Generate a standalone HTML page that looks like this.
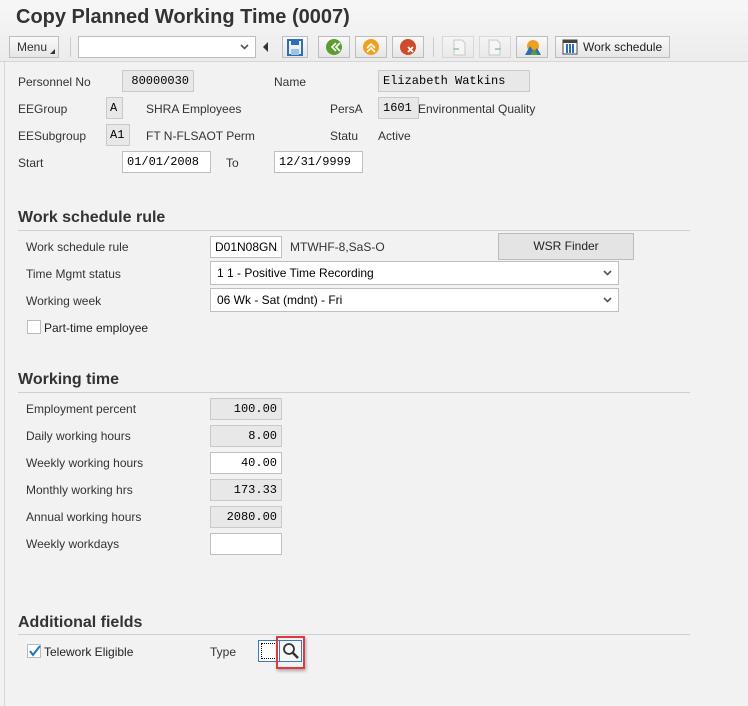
<!DOCTYPE html>
<html><head><meta charset="utf-8"><style>
*{box-sizing:border-box;margin:0;padding:0}
body{width:748px;height:706px;background:#f2f2f2;font-family:"Liberation Sans",Arial,sans-serif;font-size:12px;color:#333;position:relative;overflow:hidden}
.a{position:absolute}
.t{position:absolute;line-height:14px;font-size:12px;color:#333}
.in{position:absolute;height:22px;border:1px solid #bfbfbf;background:#fff;font-family:"Liberation Mono",monospace;font-size:12px;line-height:20px;padding:0 4px;color:#000}
.ro{background:#e8e8e8;border-color:#c9c9c9}
.r{text-align:right}
.h{position:absolute;left:18px;font-size:16px;font-weight:bold;color:#333}
.ln{position:absolute;left:18px;width:672px;height:1px;background:#cfcfcf}
.tb{position:absolute;top:36px;height:22px;border:1px solid #bdbdbd;background:linear-gradient(#fafafa,#e6e6e6)}
.sel{position:absolute;left:210px;width:409px;height:24px;border:1px solid #bfbfbf;background:#fff;font-size:12px;line-height:22px;padding-left:6px;color:#000}
.chev{position:absolute;right:6px;top:8px}
</style></head><body>
<div class="a" style="left:0;top:0;width:748px;height:62px;background:linear-gradient(#f7f7f7,#ececec);border-bottom:1px solid #d6d6d6"></div>
<div class="a" style="left:16px;top:6px;font-size:20px;font-weight:bold;color:#333">Copy Planned Working Time (0007)</div>
<div class="tb" style="left:9px;width:50px;font-size:12px;line-height:20px;padding-left:7px">Menu<svg class="a" style="right:3px;bottom:3px" width="5" height="5"><path d="M5 0v5h-5z" fill="#333"/></svg></div>
<div class="a" style="left:70px;top:37px;width:1px;height:20px;background:#ccc"></div>
<div class="a" style="left:78px;top:36px;width:178px;height:22px;border:1px solid #bdbdbd;background:#fff"><svg class="chev" style="top:7px" width="9" height="6"><path d="M1 1l3.5 3.5L8 1" stroke="#555" stroke-width="1.6" fill="none"/></svg></div>
<div class="a" style="left:263px;top:42px;width:0;height:0;border-top:5px solid transparent;border-bottom:5px solid transparent;border-right:5px solid #333"></div>
<div class="tb" style="left:282px;width:26px"><svg width="24" height="20"><rect x="5" y="3" width="14" height="15" fill="none" stroke="#2c6fb7" stroke-width="2"/><rect x="8" y="3" width="8" height="5" fill="#2c6fb7"/><rect x="8" y="12" width="8" height="6" fill="#9cc3ec"/></svg></div>
<div class="tb" style="left:318px;width:32px"><svg width="30" height="20"><circle cx="15" cy="10" r="8" fill="#5a9e32"/><path d="M17 6l-4 4 4 4M21 6l-4 4 4 4" stroke="#fff" stroke-width="1.6" fill="none"/></svg></div>
<div class="tb" style="left:355px;width:32px"><svg width="30" height="20"><circle cx="15" cy="10" r="8" fill="#f0a020"/><path d="M11 11l4-4 4 4M11 15l4-4 4 4" stroke="#fff" stroke-width="1.6" fill="none"/></svg></div>
<div class="tb" style="left:392px;width:32px"><svg width="30" height="20"><circle cx="15" cy="10" r="8" fill="#cf4a2a"/><path d="M15 10l5 5M20 10l-5 5" stroke="#fff" stroke-width="1.8"/></svg></div>
<div class="a" style="left:433px;top:37px;width:1px;height:20px;background:#ccc"></div>
<div class="tb" style="left:442px;width:32px;opacity:.45"><svg width="30" height="20"><path d="M11 3h8l3 3v12h-11z" fill="#fff" stroke="#999"/><path d="M10 12h6" stroke="#6a6" stroke-width="2"/></svg></div>
<div class="tb" style="left:479px;width:32px;opacity:.45"><svg width="30" height="20"><path d="M9 3h8l3 3v12h-11z" fill="#fff" stroke="#999"/><path d="M15 12h6" stroke="#6a6" stroke-width="2"/></svg></div>
<div class="tb" style="left:516px;width:32px"><svg width="30" height="20"><circle cx="16" cy="9" r="6" fill="#f0a020"/><path d="M8 18l5-9 4 6 3-4 4 7z" fill="#2c6fb7"/><path d="M13 18l4-6 4 6z" fill="#5a9e32"/></svg></div>
<div class="tb" style="left:555px;width:115px;line-height:20px;padding-left:27px;font-size:12px;color:#222"><svg class="a" style="left:6px;top:2px" width="16" height="16"><rect x="1" y="1" width="14" height="14" fill="#fff" stroke="#444"/><rect x="1" y="1" width="14" height="3" fill="#444"/><path d="M5 5v9M8 5v9M11 5v9" stroke="#2c6fb7" stroke-width="2"/></svg>Work schedule</div>
<div class="a" style="left:4px;top:62px;width:1px;height:644px;background:#d6d6d6"></div>

<div class="t" style="left:18px;top:75px">Personnel No</div>
<div class="in ro r" style="left:122px;top:70px;width:72px">80000030</div>
<div class="t" style="left:274px;top:75px">Name</div>
<div class="in ro" style="left:378px;top:70px;width:152px">Elizabeth Watkins</div>
<div class="t" style="left:18px;top:102px">EEGroup</div>
<div class="in ro" style="left:106px;top:97px;width:17px;padding:0 3px">A</div>
<div class="t" style="left:146px;top:102px">SHRA Employees</div>
<div class="t" style="left:330px;top:102px">PersA</div>
<div class="in ro" style="left:378px;top:97px;width:41px">1601</div>
<div class="t" style="left:418px;top:102px">Environmental Quality</div>
<div class="t" style="left:18px;top:129px">EESubgroup</div>
<div class="in ro" style="left:106px;top:124px;width:24px;padding:0 3px">A1</div>
<div class="t" style="left:146px;top:129px">FT N-FLSAOT Perm</div>
<div class="t" style="left:330px;top:129px">Statu</div>
<div class="t" style="left:378px;top:129px">Active</div>
<div class="t" style="left:18px;top:156px">Start</div>
<div class="in" style="left:122px;top:151px;width:89px">01/01/2008</div>
<div class="t" style="left:226px;top:156px">To</div>
<div class="in" style="left:274px;top:151px;width:89px">12/31/9999</div>

<div class="h" style="top:209px">Work schedule rule</div>
<div class="ln" style="top:230px"></div>
<div class="t" style="left:26px;top:240px">Work schedule rule</div>
<div class="in" style="left:210px;top:236px;width:72px;font-family:'Liberation Sans',sans-serif;padding:0 4px">D01N08GN</div>
<div class="t" style="left:290px;top:240px">MTWHF-8,SaS-O</div>
<div class="a" style="left:498px;top:233px;width:136px;height:27px;border:1px solid #bbb;background:#e4e4e4;text-align:center;line-height:25px;color:#222">WSR Finder</div>
<div class="t" style="left:26px;top:267px">Time Mgmt status</div>
<div class="sel" style="top:261px">1 1 - Positive Time Recording<svg class="chev" width="9" height="6"><path d="M1 1l3.5 3.5L8 1" stroke="#555" stroke-width="1.6" fill="none"/></svg></div>
<div class="t" style="left:26px;top:294px">Working week</div>
<div class="sel" style="top:288px">06 Wk - Sat (mdnt) - Fri<svg class="chev" width="9" height="6"><path d="M1 1l3.5 3.5L8 1" stroke="#555" stroke-width="1.6" fill="none"/></svg></div>
<div class="a" style="left:27px;top:320px;width:14px;height:14px;border:1px solid #bbb;background:#fff"></div>
<div class="t" style="left:44px;top:321px;color:#222">Part-time employee</div>

<div class="h" style="top:371px">Working time</div>
<div class="ln" style="top:392px"></div>
<div class="t" style="left:26px;top:402px">Employment percent</div>
<div class="in ro r" style="left:210px;top:398px;width:72px">100.00</div>
<div class="t" style="left:26px;top:429px">Daily working hours</div>
<div class="in ro r" style="left:210px;top:425px;width:72px">8.00</div>
<div class="t" style="left:26px;top:456px">Weekly working hours</div>
<div class="in r" style="left:210px;top:452px;width:72px">40.00</div>
<div class="t" style="left:26px;top:483px">Monthly working hrs</div>
<div class="in ro r" style="left:210px;top:479px;width:72px">173.33</div>
<div class="t" style="left:26px;top:510px">Annual working hours</div>
<div class="in ro r" style="left:210px;top:506px;width:72px">2080.00</div>
<div class="t" style="left:26px;top:537px">Weekly workdays</div>
<div class="in" style="left:210px;top:533px;width:72px"></div>

<div class="h" style="top:614px">Additional fields</div>
<div class="ln" style="top:634px"></div>
<div class="a" style="left:27px;top:644px;width:14px;height:14px;border:1px solid #bbb;background:#fff"><svg class="a" style="left:1px;top:0" width="12" height="12"><path d="M1 6l3 4 7-9" stroke="#1a78c2" stroke-width="2" fill="none"/></svg></div>
<div class="t" style="left:44px;top:645px;color:#222">Telework Eligible</div>
<div class="t" style="left:210px;top:645px">Type</div>
<div class="a" style="left:258px;top:640px;width:22px;height:22px;border:1px solid #3a7bb8;background:#fff"><div class="a" style="left:2px;top:2px;width:16px;height:16px;border:1px dotted #000"></div></div>
<div class="a" style="left:276px;top:636px;width:29px;height:33px;border:2px solid #e0393e;box-shadow:1px 2px 3px rgba(0,0,0,.3)"></div>
<div class="a" style="left:279px;top:640px;width:23px;height:22px;border:1px solid #3a7bb8;background:#f6f6f6"><svg width="22" height="20"><circle cx="9" cy="8" r="5" fill="none" stroke="#333" stroke-width="1.8"/><path d="M13 12l5 5" stroke="#333" stroke-width="2.5"/></svg></div>
</body></html>
